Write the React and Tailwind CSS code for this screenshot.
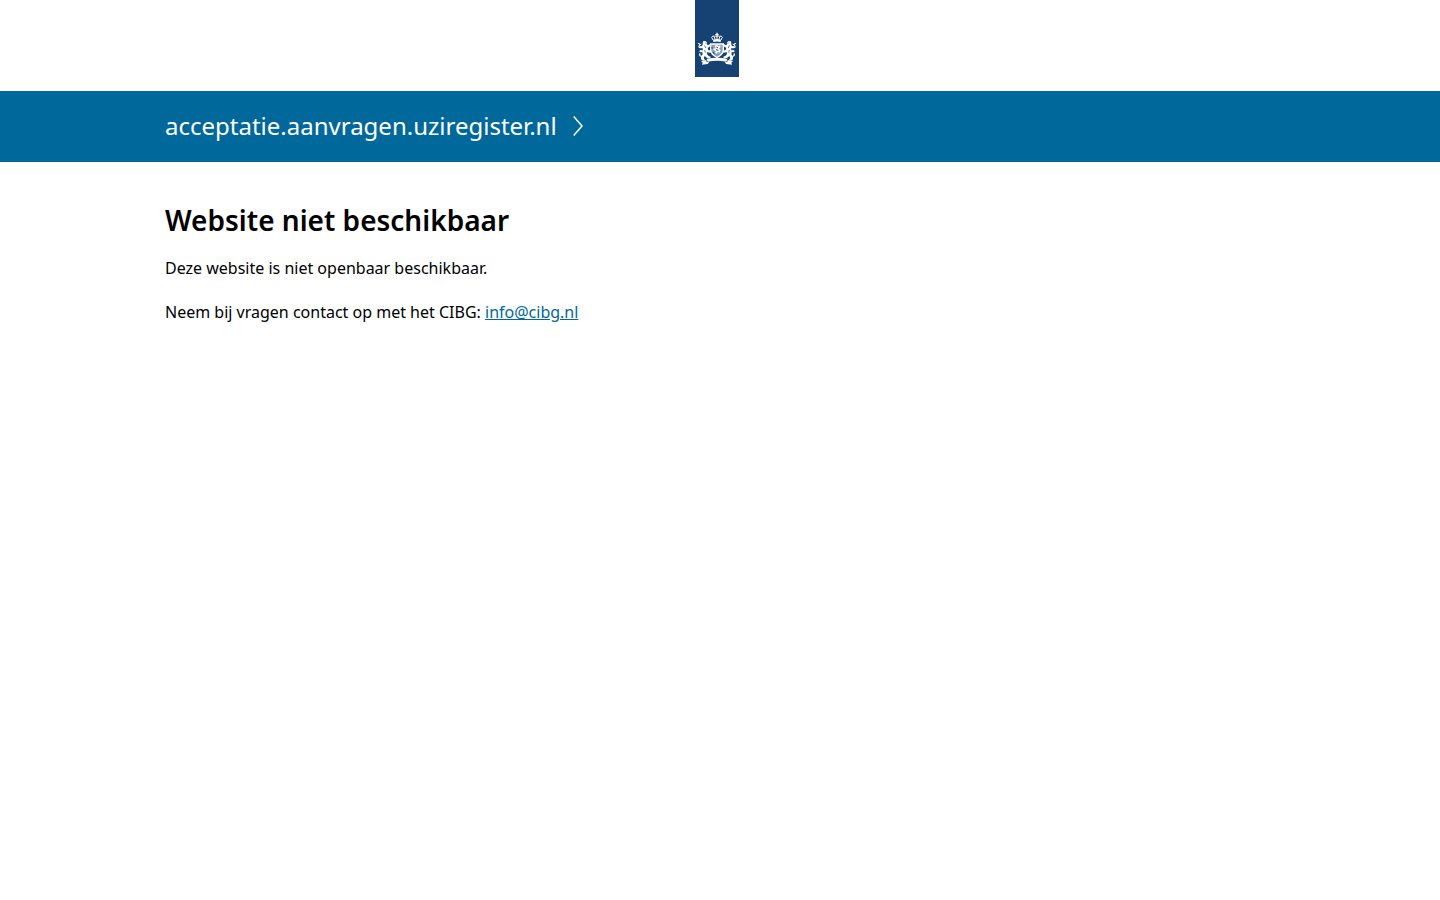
function Lion() {
  return (
    <g>
      <path d="M24 124 L31 123 L36 127 L35 132 L39 136 L46 131 L48 136 L42 142 L38 143 L40 150 L47 152 L49 157 L42 158 L37 155 L36 162 L41 168 L47 170 L46 175 L36 174 L29 168 L26 174 L30 180 L24 182 L18 178 L18 170 L23 163 L21 154 L24 147 L21 139 L23 133 Z" />
      <path d="M24 138 L14 139 L10 143 L15 145 L24 145 Z" />
      <path d="M22 151 L15 150 L13 155 L18 157 L23 156 Z" />
      <path d="M20 172 L13 168 L12 160 L17 161 L16 166 L22 168" />
      <path d="M11 141 L15 132 L9 130 M13 136 L19 132" fill="none" stroke="#fff" strokeWidth="3" />
      <path d="M29 136 L32 144 M29 150 L31 158 M31 129 h3" fill="none" stroke="#154273" strokeWidth="2" />
    </g>
  );
}

function Logo() {
  return (
    <svg viewBox="0 0 132 231" className="h-[77px] w-11" role="img" aria-label="Rijksoverheid">
      <rect width="132" height="231" fill="#154273" />
      <g fill="#fff">
        <path d="M64 98h4v4h3v3h-3v4h-4v-4h-3v-3h3z" />
        <path
          d="M54 120 L50 112 Q52 106 59 109 Q63 107 66 109 Q69 107 73 109 Q80 106 82 112 L78 120 M60 119 L58 110 M66 119 V109 M72 119 L74 110"
          fill="none"
          stroke="#fff"
          strokeWidth="3"
        />
        <path d="M54 119 Q66 115 78 119 L77 126 Q66 123 55 126 Z" />
        <Lion />
        <g transform="translate(132 0) scale(-1 1)">
          <Lion />
        </g>
        <path
          d="M47 132 H85 V151 Q83 164 66 172 Q49 164 47 151 Z"
          fill="#8aa0b9"
          stroke="#fff"
          strokeWidth="4"
        />
        <path d="M59 137 L65 135 L71 138 L75 136 L77 141 L72 146 L77 151 L73 159 L69 155 L65 161 L60 158 L63 152 L56 151 L55 146 L62 145 Z" />
        <path d="M64 141 L69 144 M63 149 L70 151 M54 156 L58 162 M51 141 v5" stroke="#154273" strokeWidth="3" />
        <path d="M35 176 Q66 171 97 176 L94 185 Q66 180 38 185 Z" />
        <path d="M34 180 L18 183 L23 188 L21 194 L38 192 L43 187 L35 186 Z" />
        <path d="M98 180 L114 183 L109 188 L111 194 L94 192 L89 187 L97 186 Z" />
      </g>
    </svg>
  );
}

export default function App() {
  return (
    <div className="min-h-screen bg-white font-['Noto_Sans',sans-serif] text-base text-black">
      <header>
        <div className="flex justify-center pr-1.5 pb-3.5">
          <Logo />
        </div>
        <div className="bg-[#01689b] text-white">
          <div className="mx-auto flex w-full max-w-[1140px] items-center gap-4 px-[15px] pt-[17px] pb-[18px]">
            <span className="text-2xl leading-9">acceptatie.aanvragen.uziregister.nl</span>
            <svg
              viewBox="0 0 10 20"
              className="h-5 w-2.5"
              fill="none"
              stroke="currentColor"
              strokeWidth="1.5"
              aria-hidden="true"
            >
              <path d="M.7.5 9 10 .7 19.5" />
            </svg>
          </div>
        </div>
      </header>
      <main className="mx-auto w-full max-w-[1140px] px-[15px] pt-10">
        <h1 className="text-[28px] leading-9 font-semibold">Website niet beschikbaar</h1>
        <p className="mt-4 leading-7">Deze website is niet openbaar beschikbaar.</p>
        <p className="mt-4 leading-7">
          Neem bij vragen contact op met het CIBG:{' '}
          <a href="mailto:info@cibg.nl" className="text-[#01689b] underline">
            info@cibg.nl
          </a>
        </p>
      </main>
    </div>
  );
}
